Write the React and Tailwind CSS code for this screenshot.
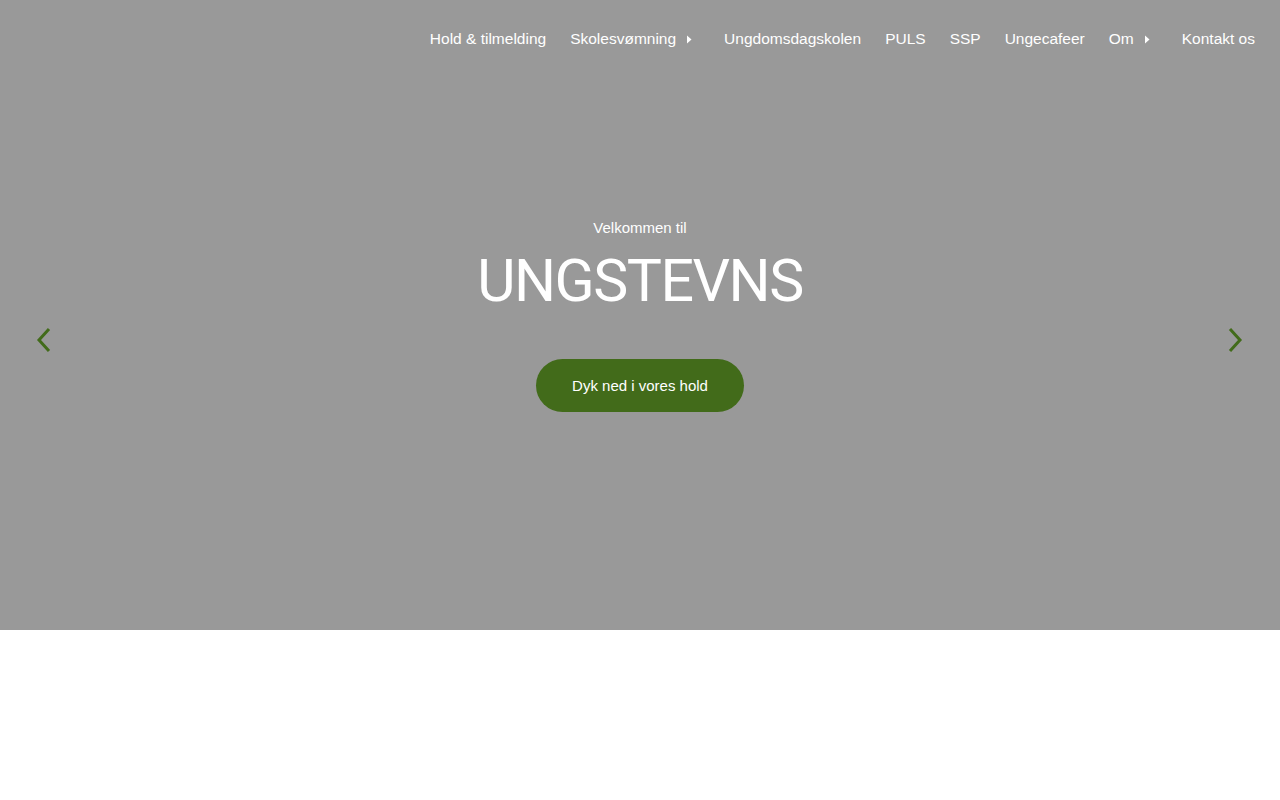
import { useState } from "react";

const navItems = [
  { label: "Hold & tilmelding" },
  { label: "Skolesvømning", caret: true },
  { label: "Ungdomsdagskolen" },
  { label: "PULS" },
  { label: "SSP" },
  { label: "Ungecafeer" },
  { label: "Om", caret: true },
  { label: "Kontakt os" },
];

function Caret() {
  return (
    <svg width="6" height="9" viewBox="0 0 6 9" className="ml-[10px] mt-[1px]">
      <path d="M1 0.5 L5.5 4.5 L1 8.5 Z" fill="#ffffff" />
    </svg>
  );
}

function Chevron({ dir }) {
  return (
    <svg width="18" height="28" viewBox="0 0 18 28" fill="none">
      {dir === "left" ? (
        <path d="M14 3 L4 14 L14 25" stroke="#426b1a" strokeWidth="3" />
      ) : (
        <path d="M4 3 L14 14 L4 25" stroke="#426b1a" strokeWidth="3" />
      )}
    </svg>
  );
}

export default function App() {
  const [slide, setSlide] = useState(0);

  return (
    <div className="min-h-screen bg-white" style={{ fontFamily: "'Liberation Sans', Arial, sans-serif" }}>
      {/* Hero */}
      <section className="relative h-[630px] bg-[#999999] flex flex-col">
        <header className="flex justify-end pt-[29px] pr-[25px]">
          <nav className="flex items-center text-[15.5px] text-white">
            {navItems.map((item, i) => (
              <a
                key={item.label}
                href="#"
                className={`flex items-center leading-[20px] ${i === 0 ? "" : navItems[i - 1].caret ? "ml-[32px]" : "ml-[24px]"}`}
              >
                {item.label}
                {item.caret && <Caret />}
              </a>
            ))}
          </nav>
        </header>

        {/* Slide content */}
        <div className="flex flex-col items-center text-white mt-[169px]">
          <p className="text-[15px] leading-[20px]">Velkommen til</p>
          <h1
            className="text-[59px] leading-[68px] mt-[9px] tracking-[-1.5px]"
            style={{ fontFamily: "Roboto, 'Liberation Sans', sans-serif" }}
          >
            UNGSTEVNS
          </h1>
          <a
            href="#"
            className="mt-[44px] w-[208px] h-[53px] rounded-full bg-[#426b1a] flex items-center justify-center text-[15px] pt-[2px]"
          >
            Dyk ned i vores hold
          </a>
        </div>

        {/* Carousel arrows */}
        <button onClick={() => setSlide(slide - 1)} className="absolute left-[35px] top-[326px]">
          <Chevron dir="left" />
        </button>
        <button onClick={() => setSlide(slide + 1)} className="absolute right-[36px] top-[326px]">
          <Chevron dir="right" />
        </button>
      </section>
    </div>
  );
}
